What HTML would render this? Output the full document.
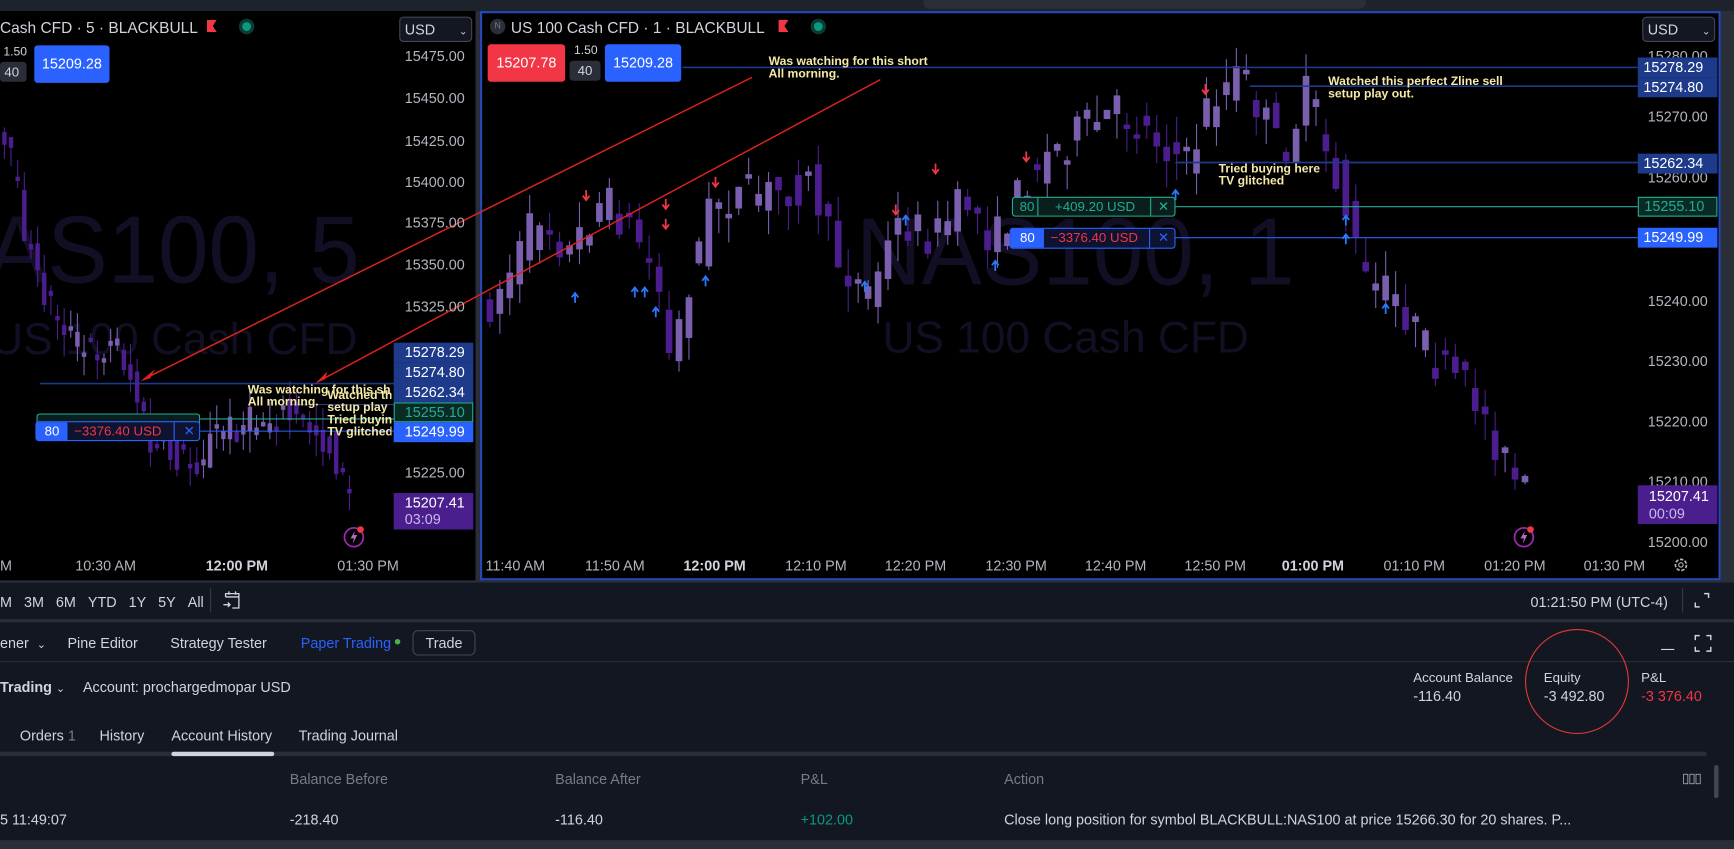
<!DOCTYPE html>
<html><head><meta charset="utf-8">
<style>
*{margin:0;padding:0;box-sizing:border-box}
html,body{width:1734px;height:849px;overflow:hidden;background:#2a2e39;font-family:"Liberation Sans",sans-serif}
#w{position:absolute;left:0;top:0;width:1568px;height:768px;transform:scale(1.10587,1.10547);transform-origin:0 0;background:#2a2e39}
.a{position:absolute}
.t{position:absolute;white-space:nowrap}
.ax{color:#b2b5be;font-size:13px}
.lbl{position:absolute;color:#fff;font-size:13px;padding:0 5px;height:18px;line-height:18px;width:72px}
.note{position:absolute;color:#f5e9a8;font-size:11px;font-weight:bold;line-height:11px;white-space:nowrap}
.p{color:#d1d4dc;font-size:13px}
</style></head><body><div id="w">
<div class="a" style="left:0;top:0;width:1568px;height:10px;background:#1e222d"></div>
<div class="a" style="left:835px;top:0;width:400px;height:8px;background:#2a2e39;border-radius:0 0 6px 6px"></div>
<div class="a" style="left:0;top:10px;width:430px;height:515px;background:#000;overflow:hidden" id="L">
<div class="t" style="left:-12px;top:170px;font-size:82px;color:#120f24;transform:scaleY(1.05)">AS100, 5</div>
<div class="t" style="left:-8px;top:275px;font-size:40px;color:#120f24">US 100 Cash CFD</div>
</div>
<div class="a" style="left:434px;top:10px;width:1122px;height:515px;background:#000;border:2px solid #2448b8;overflow:hidden" id="R">
<div class="t" style="left:338px;top:170px;font-size:82px;color:#120f24;transform:scaleY(1.05)">NAS100, 1</div>
<div class="t" style="left:362px;top:272px;font-size:40px;color:#120f24">US 100 Cash CFD</div>
</div>
<div class="a" style="left:1556px;top:10px;width:12px;height:515px;background:#2a2e39"></div>
<svg class="a" style="left:0;top:0" width="1568" height="530" id="S"></svg>

<div class="t" style="left:0;top:17px;color:#d1d4dc;font-size:14px">Cash CFD · 5 · BLACKBULL</div>
<div class="a" style="left:187px;top:18px;width:9px;height:11px;background:#f23645;clip-path:polygon(0 0,100% 0,60% 50%,100% 100%,0 100%)"></div>
<div class="a" style="left:219px;top:20px;width:8px;height:8px;border-radius:50%;background:#089981;box-shadow:0 0 0 3px #0d3a33"></div>
<div class="t" style="left:361px;top:15px;width:66px;height:23px;border:1px solid #434651;border-radius:4px;color:#d1d4dc;font-size:13px;padding:3px 0 0 4px;background:#131722">USD <span style="font-size:9px;margin-left:18px">⌄</span></div>
<div class="t" style="left:3px;top:41px;color:#d1d4dc;font-size:11px">1.50</div>
<div class="a" style="left:0;top:56px;width:24px;height:18px;background:#2a2e39;color:#d1d4dc;font-size:12px;line-height:18px;padding-left:4px;border-radius:3px">40</div>
<div class="a" style="left:31px;top:41px;width:68px;height:34px;background:#2962ff;color:#fff;font-size:13px;line-height:34px;text-align:center;border-radius:3px">15209.28</div>
<div class="a" style="left:443px;top:17px;width:14px;height:14px;border-radius:50%;background:#2a2e39;color:#787b86;font-size:8px;text-align:center;line-height:14px">N</div>
<div class="t" style="left:462px;top:17px;color:#d1d4dc;font-size:14px">US 100 Cash CFD · 1 · BLACKBULL</div>
<div class="a" style="left:704px;top:18px;width:9px;height:11px;background:#f23645;clip-path:polygon(0 0,100% 0,60% 50%,100% 100%,0 100%)"></div>
<div class="a" style="left:736px;top:20px;width:8px;height:8px;border-radius:50%;background:#089981;box-shadow:0 0 0 3px #0d3a33"></div>
<div class="t" style="left:1485px;top:15px;width:66px;height:23px;border:1px solid #434651;border-radius:4px;color:#d1d4dc;font-size:13px;padding:3px 0 0 4px;background:#131722">USD <span style="font-size:9px;margin-left:18px">⌄</span></div>
<div class="a" style="left:441px;top:40px;width:70px;height:34px;background:#f23645;color:#fff;font-size:13px;line-height:34px;text-align:center;border-radius:3px">15207.78</div>
<div class="t" style="left:519px;top:40px;color:#d1d4dc;font-size:11px">1.50</div>
<div class="a" style="left:515px;top:55px;width:28px;height:18px;background:#2a2e39;color:#d1d4dc;font-size:12px;line-height:18px;text-align:center;border-radius:3px">40</div>
<div class="a" style="left:547px;top:40px;width:69px;height:34px;background:#2962ff;color:#fff;font-size:13px;line-height:34px;text-align:center;border-radius:3px">15209.28</div>

<div class="t ax" style="left:366px;top:43px">15475.00</div>
<div class="t ax" style="left:366px;top:81px">15450.00</div>
<div class="t ax" style="left:366px;top:120px">15425.00</div>
<div class="t ax" style="left:366px;top:157px">15400.00</div>
<div class="t ax" style="left:366px;top:194px">15375.00</div>
<div class="t ax" style="left:366px;top:232px">15350.00</div>
<div class="t ax" style="left:366px;top:270px">15325.00</div>
<div class="t ax" style="left:366px;top:420px">15225.00</div>
<div class="lbl" style="left:356px;top:310px;background:#1e3a8a;padding-left:10px">15278.29</div>
<div class="lbl" style="left:356px;top:328px;background:#1e3a8a;padding-left:10px">15274.80</div>
<div class="lbl" style="left:356px;top:346px;background:#1e3a8a;padding-left:10px">15262.34</div>
<div class="lbl" style="left:356px;top:364px;background:#0a2a24;color:#22ab94;border:1px solid #22ab94;padding-left:9px;line-height:16px">15255.10</div>
<div class="lbl" style="left:356px;top:382px;background:#2962ff;padding-left:10px">15249.99</div>
<div class="a" style="left:356px;top:446px;width:72px;height:33px;background:#4a1e8c;color:#fff;font-size:13px;padding:1px 0 0 10px;line-height:15px">15207.41<br><span style="color:#c9b8ef">03:09</span></div>
<div class="t ax" style="left:0;top:504px">M</div>
<div class="t ax" style="left:68px;top:504px">10:30 AM</div>
<div class="t ax" style="left:186px;top:504px;color:#d1d4dc;font-weight:bold">12:00 PM</div>
<div class="t ax" style="left:305px;top:504px">01:30 PM</div>
<div class="t ax" style="left:1490px;top:43px">15280.00</div>
<div class="t ax" style="left:1490px;top:98px">15270.00</div>
<div class="t ax" style="left:1490px;top:153px">15260.00</div>
<div class="t ax" style="left:1490px;top:265px">15240.00</div>
<div class="t ax" style="left:1490px;top:319px">15230.00</div>
<div class="t ax" style="left:1490px;top:374px">15220.00</div>
<div class="t ax" style="left:1490px;top:428px">15210.00</div>
<div class="t ax" style="left:1490px;top:483px">15200.00</div>
<div class="lbl" style="left:1481px;top:52px;background:#1e3a8a">15278.29</div>
<div class="lbl" style="left:1481px;top:70px;background:#1e3a8a">15274.80</div>
<div class="lbl" style="left:1481px;top:139px;background:#1e3a8a">15262.34</div>
<div class="lbl" style="left:1481px;top:178px;background:#0a2a24;color:#22ab94;border:1px solid #22ab94;line-height:16px">15255.10</div>
<div class="lbl" style="left:1481px;top:206px;background:#2962ff">15249.99</div>
<div class="a" style="left:1481px;top:439px;width:72px;height:35px;background:#4a1e8c;color:#fff;font-size:13px;padding:2px 0 0 10px;line-height:16px">15207.41<br><span style="color:#c9b8ef">00:09</span></div>
<div class="t ax" style="left:439px;top:504px">11:40 AM</div>
<div class="t ax" style="left:529px;top:504px">11:50 AM</div>
<div class="t ax" style="left:618px;top:504px;color:#d1d4dc;font-weight:bold">12:00 PM</div>
<div class="t ax" style="left:710px;top:504px">12:10 PM</div>
<div class="t ax" style="left:800px;top:504px">12:20 PM</div>
<div class="t ax" style="left:891px;top:504px">12:30 PM</div>
<div class="t ax" style="left:981px;top:504px">12:40 PM</div>
<div class="t ax" style="left:1071px;top:504px">12:50 PM</div>
<div class="t ax" style="left:1159px;top:504px;color:#d1d4dc;font-weight:bold">01:00 PM</div>
<div class="t ax" style="left:1251px;top:504px">01:10 PM</div>
<div class="t ax" style="left:1342px;top:504px">01:20 PM</div>
<div class="t ax" style="left:1432px;top:504px">01:30 PM</div>

<div class="a" style="left:915px;top:178px;width:148px;height:18px;border:1px solid #22ab94;border-radius:3px;background:#0a1f1c;color:#22ab94;font-size:12px;line-height:16px">
<span class="a" style="left:6px">80</span><span class="a" style="left:22px;top:0;width:1px;height:16px;background:#22ab94"></span><span class="a" style="left:38px">+409.20 USD</span><span class="a" style="left:124px;top:0;width:1px;height:16px;background:#22ab94"></span><span class="a" style="left:131px">✕</span></div>
<div class="a" style="left:913px;top:206px;width:150px;height:19px;border:1px solid #2962ff;border-radius:3px;background:#0d1330;color:#f23645;font-size:12px;line-height:17px">
<span class="a" style="left:0;top:0;width:30px;height:17px;background:#2962ff;color:#fff;text-align:center">80</span><span class="a" style="left:36px">−3376.40 USD</span><span class="a" style="left:125px;top:0;width:1px;height:17px;background:#2962ff"></span><span class="a" style="left:133px;color:#2962ff">✕</span></div>
<div class="a" style="left:33px;top:374px;width:148px;height:10px;border:1px solid #22ab94;border-bottom:none;border-radius:3px 3px 0 0;background:#0a1f1c"></div>
<div class="a" style="left:32px;top:381px;width:149px;height:18px;border:1px solid #2962ff;border-radius:3px;background:#0d1330;color:#f23645;font-size:12px;line-height:16px">
<span class="a" style="left:0;top:0;width:28px;height:16px;background:#2962ff;color:#fff;text-align:center">80</span><span class="a" style="left:34px">−3376.40 USD</span><span class="a" style="left:124px;top:0;width:1px;height:16px;background:#2962ff"></span><span class="a" style="left:133px;color:#2962ff">✕</span></div>

<div class="note" style="left:695px;top:51px">Was watching for this short<br>All morning.</div>
<div class="note" style="left:1201px;top:69px">Watched this perfect Zline sell<br>setup play out.</div>
<div class="note" style="left:1102px;top:148px">Tried buying here<br>TV glitched</div>
<div class="note" style="left:224px;top:348px">Was watching for this sh<br>All morning.</div>
<div class="note" style="left:296px;top:353px;overflow:hidden;width:58px">Watched th<br>setup play<br>Tried buying h<br>TV glitched</div>

<svg class="a" style="left:310px;top:474px" width="22" height="22"><circle cx="10" cy="12" r="8.5" fill="none" stroke="#9c27b0" stroke-width="1.6"/><path d="M11 6 L7 13 H10 L9 18 L13 10 H10 Z" fill="#ba68c8"/><circle cx="16" cy="5" r="3" fill="#f23645"/></svg>
<svg class="a" style="left:1368px;top:474px" width="22" height="22"><circle cx="10" cy="12" r="8.5" fill="none" stroke="#9c27b0" stroke-width="1.6"/><path d="M11 6 L7 13 H10 L9 18 L13 10 H10 Z" fill="#ba68c8"/><circle cx="16" cy="5" r="3" fill="#f23645"/></svg>
<svg class="a" style="left:1512px;top:503px" width="16" height="16"><circle cx="8" cy="8" r="5" fill="none" stroke="#b2b5be" stroke-width="1.5" stroke-dasharray="3 1.5"/><circle cx="8" cy="8" r="2" fill="none" stroke="#b2b5be"/></svg>

<div class="a" style="left:0;top:527px;width:1568px;height:33px;background:#131722"></div>
<div class="t p" style="left:0;top:537px">M&nbsp;&nbsp;&nbsp;3M&nbsp;&nbsp;&nbsp;6M&nbsp;&nbsp;&nbsp;YTD&nbsp;&nbsp;&nbsp;1Y&nbsp;&nbsp;&nbsp;5Y&nbsp;&nbsp;&nbsp;All</div>
<div class="a" style="left:190px;top:532px;width:1px;height:22px;background:#363a45"></div>
<svg class="a" style="left:200px;top:533px" width="20" height="20"><path d="M4 7 V4 H16 V17 H10 M4 7 H16 M7 2 V5 M13 2 V5 M2 14 H8 M6 12 L8 14 L6 16" fill="none" stroke="#d1d4dc" stroke-width="1.2"/></svg>
<div class="t p" style="left:1384px;top:537px">01:21:50 PM (UTC-4)</div>
<div class="a" style="left:1521px;top:532px;width:1px;height:22px;background:#363a45"></div>
<svg class="a" style="left:1531px;top:535px" width="16" height="16"><path d="M2 10 V14 H6 M10 2 H14 V6" fill="none" stroke="#d1d4dc" stroke-width="1.3"/></svg>
<div class="a" style="left:0;top:563px;width:1568px;height:205px;background:#131722"></div>
<div class="a" style="left:0;top:598px;width:1568px;height:1px;background:#2a2e39"></div>
<div class="t p" style="left:0;top:574px">ener&nbsp;&nbsp;<span style="font-size:10px">⌄</span></div>
<div class="t p" style="left:61px;top:574px">Pine Editor</div>
<div class="t p" style="left:154px;top:574px">Strategy Tester</div>
<div class="t p" style="left:272px;top:574px;color:#2962ff">Paper Trading</div>
<div class="a" style="left:357px;top:578px;width:5px;height:5px;border-radius:50%;background:#4caf50"></div>
<div class="t p" style="left:373px;top:570px;width:57px;height:23px;border:1px solid #434651;border-radius:5px;text-align:center;line-height:21px">Trade</div>
<div class="a" style="left:1502px;top:587px;width:12px;height:1px;background:#d1d4dc"></div>
<svg class="a" style="left:1532px;top:574px" width="16" height="16"><path d="M1 5 V1 H5 M11 1 H15 V5 M1 11 V15 H5 M11 15 H15 V11" fill="none" stroke="#d1d4dc" stroke-width="1.3"/></svg>
<div class="t p" style="left:0;top:614px;font-weight:bold">Trading <span style="font-size:10px;font-weight:normal">⌄</span></div>
<div class="t p" style="left:75px;top:614px">Account: prochargedmopar USD</div>
<div class="t" style="left:1278px;top:606px;color:#d1d4dc;font-size:12px">Account Balance</div>
<div class="t p" style="left:1278px;top:622px">-116.40</div>
<div class="t" style="left:1396px;top:606px;color:#d1d4dc;font-size:12px">Equity</div>
<div class="t p" style="left:1396px;top:622px">-3 492.80</div>
<div class="t" style="left:1484px;top:606px;color:#d1d4dc;font-size:12px">P&amp;L</div>
<div class="t p" style="left:1484px;top:622px;color:#f23645">-3 376.40</div>
<div class="a" style="left:1379px;top:569px;width:94px;height:95px;border:1.5px solid #e53935;border-radius:50%"></div>
<div class="t p" style="left:18px;top:658px">Orders <span style="color:#787b86">1</span></div>
<div class="t p" style="left:90px;top:658px">History</div>
<div class="t p" style="left:155px;top:658px">Account History</div>
<div class="t p" style="left:270px;top:658px">Trading Journal</div>
<div class="a" style="left:0;top:680px;width:1543px;height:4px;background:#2a2e39"></div>
<div class="a" style="left:155px;top:680px;width:93px;height:4px;background:#d1d4dc;border-radius:2px"></div>
<div class="t" style="left:262px;top:697px;color:#787b86;font-size:13px">Balance Before</div>
<div class="t" style="left:502px;top:697px;color:#787b86;font-size:13px">Balance After</div>
<div class="t" style="left:724px;top:697px;color:#787b86;font-size:13px">P&amp;L</div>
<div class="t" style="left:908px;top:697px;color:#787b86;font-size:13px">Action</div>
<div class="t" style="left:1521px;top:697px;color:#b2b5be;font-size:12px;letter-spacing:-1px">▯▯▯</div>
<div class="a" style="left:1550px;top:692px;width:4px;height:30px;background:#434651;border-radius:2px"></div>
<div class="t p" style="left:0;top:734px">5 11:49:07</div>
<div class="t p" style="left:262px;top:734px">-218.40</div>
<div class="t p" style="left:502px;top:734px">-116.40</div>
<div class="t p" style="left:724px;top:734px;color:#089981">+102.00</div>
<div class="t p" style="left:908px;top:734px">Close long position for symbol BLACKBULL:NAS100 at price 15266.30 for 20 shares. P...</div>
<div class="a" style="left:0;top:760px;width:1568px;height:8px;background:#2a2e39"></div>
</div>
<script>
(function(){
var S=document.getElementById('S'),h='';
var seed=7;function r(){seed=(seed*16807)%2147483647;return seed/2147483647;}
function interp(pts,x){for(var i=0;i<pts.length-1;i++){if(x>=pts[i][0]&&x<=pts[i+1][0]){var t=(x-pts[i][0])/(pts[i+1][0]-pts[i][0]);return pts[i][1]+t*(pts[i+1][1]-pts[i][1]);}}return pts[pts.length-1][1];}
function candles(pts,x0,x1,step,w,amp,clipR){
 for(var x=x0;x<=x1;x+=step){var c=interp(pts,x),n=interp(pts,x+step);
  var o=c+(r()-.5)*amp*1.6,cl=n+(r()-.5)*amp*1.6;var top=Math.min(o,cl),bot=Math.max(o,cl);if(bot-top<4)bot=top+4;
  var hi=top-r()*amp,lo=bot+r()*amp;var col=cl<o?'#7a5fae':'#4b1d8f';
  if(x+w>clipR)continue;
  h+='<line x1="'+(x+w/2)+'" x2="'+(x+w/2)+'" y1="'+hi.toFixed(1)+'" y2="'+lo.toFixed(1)+'" stroke="'+col+'" stroke-width="1"/>';
  h+='<rect x="'+x+'" y="'+top.toFixed(1)+'" width="'+w+'" height="'+(bot-top).toFixed(1)+'" fill="'+col+'"/>';}
}
var R=[[440,290],[470,240],[495,190],[520,230],[550,180],[580,210],[600,250],[612,330],[630,250],[650,180],[700,175],[740,165],[760,230],[790,265],[820,200],[850,215],[880,180],[905,220],[940,150],[980,120],[1020,100],[1060,130],[1080,150],[1100,90],[1128,65],[1150,110],[1165,140],[1190,80],[1200,120],[1220,180],[1240,255],[1270,270],[1300,325],[1340,360],[1380,445]];
candles(R,440,1378,9,6,24,1480);
var L=[[0,120],[15,150],[35,250],[60,290],[80,320],[110,310],[125,350],[140,405],[180,420],[200,390],[260,375],[290,390],[305,410],[320,450]];
candles(L,2,318,6,4,20,356);
function ln(x1,x2,y,c,w){h+='<line x1="'+x1+'" x2="'+x2+'" y1="'+y+'" y2="'+y+'" stroke="'+c+'" stroke-width="'+(w||1)+'"/>';}
ln(617,1481,61,'#1e3a8a',1.5);ln(1130,1481,78,'#1e3a8a',1.5);ln(1063,1481,147,'#1e3a8a',1.5);ln(1063,1481,187,'#22ab94');ln(1063,1481,215,'#2962ff');
ln(36,356,347,'#1e3a8a',1.5);ln(181,356,379,'#22ab94');ln(181,356,390,'#2962ff');ln(260,356,366,'#1e3a8a');
h+='<line x1="680" y1="70" x2="130" y2="343" stroke="#e0231c" stroke-width="1.3"/><path d="M127 345 L140 334 L136 342 Z" fill="#e0231c"/>';
h+='<line x1="796" y1="72" x2="288" y2="345" stroke="#e0231c" stroke-width="1.3"/><path d="M285 347 L296 336 L294 343 Z" fill="#e0231c"/>';
function up(x,y){h+='<path d="M'+x+' '+(y+9)+' V'+(y+1)+' M'+(x-3)+' '+(y+4)+' L'+x+' '+y+' L'+(x+3)+' '+(y+4)+'" stroke="#2979ff" stroke-width="1.6" fill="none"/>';}
function dn(x,y){h+='<path d="M'+x+' '+y+' V'+(y+8)+' M'+(x-3)+' '+(y+5)+' L'+x+' '+(y+9)+' L'+(x+3)+' '+(y+5)+'" stroke="#f23645" stroke-width="1.6" fill="none"/>';}
[[520,265],[574,260],[583,260],[593,278],[638,250],[782,255],[819,195],[900,236],[1063,172],[1217,195],[1217,212],[1253,275]].forEach(function(a){up(a[0],a[1]);});
[[530,172],[602,180],[602,198],[647,160],[810,185],[846,148],[928,137],[1090,76]].forEach(function(a){dn(a[0],a[1]);});
S.innerHTML=h;
})();
</script>
</body></html>
